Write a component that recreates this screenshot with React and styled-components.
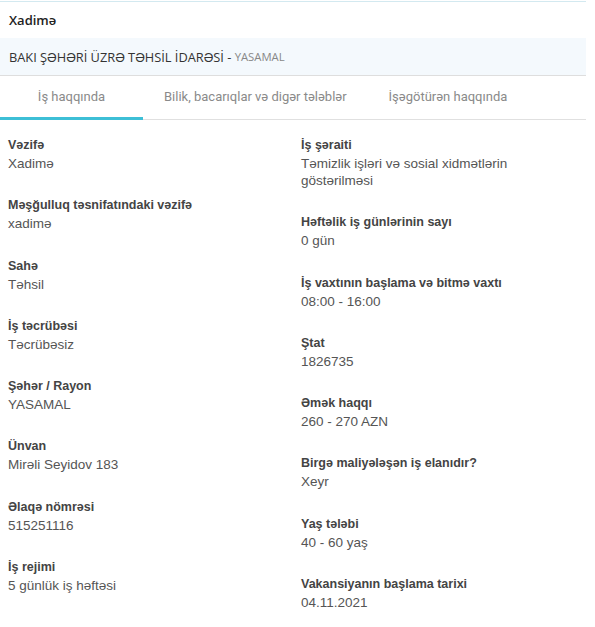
import React from 'react';
import styled, { createGlobalStyle } from 'styled-components';

const GlobalStyle = createGlobalStyle`
  body {
    margin: 0;
    background: #fff;
    font-family: "Liberation Sans", Arial, sans-serif;
  }
`;

const leftFields = [
  { label: 'Vəzifə', value: 'Xadimə' },
  { label: 'Məşğulluq təsnifatındaki vəzifə', value: 'xadimə' },
  { label: 'Sahə', value: 'Təhsil' },
  { label: 'İş təcrübəsi', value: 'Təcrübəsiz' },
  { label: 'Şəhər / Rayon', value: 'YASAMAL' },
  { label: 'Ünvan', value: 'Mirəli Seyidov 183' },
  { label: 'Əlaqə nömrəsi', value: '515251116' },
  { label: 'İş rejimi', value: '5 günlük iş həftəsi' },
];

const rightFields = [
  { label: 'İş şəraiti', value: 'Təmizlik işləri və sosial xidmətlərin göstərilməsi' },
  { label: 'Həftəlik iş günlərinin sayı', value: '0 gün' },
  { label: 'İş vaxtının başlama və bitmə vaxtı', value: '08:00 - 16:00' },
  { label: 'Ştat', value: '1826735' },
  { label: 'Əmək haqqı', value: '260 - 270 AZN' },
  { label: 'Birgə maliyələşən iş elanıdır?', value: 'Xeyr' },
  { label: 'Yaş tələbi', value: '40 - 60 yaş' },
  { label: 'Vakansiyanın başlama tarixi', value: '04.11.2021' },
];

const tabs = ['İş haqqında', 'Bilik, bacarıqlar və digər tələblər', 'İşəgötürən haqqında'];

const App = () => {
  return (
    <>
      <GlobalStyle />
      <Card>
        <Header>Xadimə</Header>
        <Company>
          BAKI ŞƏHƏRİ ÜZRƏ TƏHSİL İDARƏSİ - <District>YASAMAL</District>
        </Company>
        <Tabs>
          {tabs.map((t, i) => (
            <Tab key={t} $active={i === 0}>{t}</Tab>
          ))}
        </Tabs>
        <Details>
          <Column>
            {leftFields.map((f) => (
              <Field key={f.label}>
                <Label>{f.label}</Label>
                <Value>{f.value}</Value>
              </Field>
            ))}
          </Column>
          <Column>
            {rightFields.map((f) => (
              <Field key={f.label}>
                <Label>{f.label}</Label>
                <Value>{f.value}</Value>
              </Field>
            ))}
          </Column>
        </Details>
      </Card>
    </>
  );
};

export default App;

const Card = styled.div`
  width: 586px;
  margin-top: 1px;
  border-top: 1px solid #d3e9f0;
  background: #fff;
`;

const Header = styled.div`
  height: 36px;
  display: flex;
  align-items: center;
  padding: 0 9px;
  font-family: "Open Sans", sans-serif;
  font-weight: 600;
  font-size: 13px;
  color: #222;
`;

const Company = styled.div`
  height: 37px;
  display: flex;
  align-items: center;
  padding: 0 9px;
  background: #f4f9fd;
  border-bottom: 1px solid #dedede;
  font-family: "Open Sans", sans-serif;
  font-size: 12.8px;
  color: #333;
  white-space: pre;
`;

const District = styled.span`
  font-size: 11.3px;
  color: #888;
`;

const Tabs = styled.div`
  display: flex;
  height: 43px;
  border-bottom: 1px solid #e0e0e0;
`;

const Tab = styled.div`
  min-width: 143px;
  box-sizing: border-box;
  padding: 0 21px;
  display: flex;
  align-items: center;
  justify-content: center;
  font-family: Roboto, sans-serif;
  font-size: 13px;
  color: #8a8a8a;
  border-bottom: 3px solid ${(p) => (p.$active ? '#3dbfd6' : 'transparent')};
  margin-bottom: -1px;
`;

const Details = styled.div`
  display: grid;
  grid-template-columns: 293px 285px;
  padding: 16px 0 0 8px;
`;

const Column = styled.div`
  display: flex;
  flex-direction: column;
  gap: 24.3px;
`;

const Field = styled.div`
  display: flex;
  flex-direction: column;
`;

const Label = styled.div`
  font-size: 12.5px;
  font-weight: bold;
  line-height: 19px;
  color: #444;
`;

const Value = styled.div`
  font-size: 13.5px;
  line-height: 17px;
  color: #555;
  padding-right: 4px;
`;
